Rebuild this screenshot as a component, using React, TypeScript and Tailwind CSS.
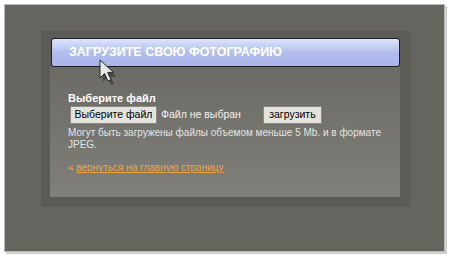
import React from 'react';

const Cursor: React.FC = () => (
  <svg width="22" height="28" viewBox="0 0 22 28" className="absolute left-[97px] top-[58px]">
    <path d="M4 4 L4 22 L8.5 17.5 L12 25 L15 23.7 L11.6 16.4 L17.5 16.4 Z" fill="#000" opacity="0.35" transform="translate(2 2)" />
    <path d="M3 2 L3 20 L7.5 15.5 L11 23 L14 21.7 L10.6 14.4 L16.5 14.4 Z" fill="#e8e8ea" stroke="#2a2a2a" strokeWidth="1" strokeLinejoin="round" />
  </svg>
);

const App: React.FC = () => {
  return (
    <div className="relative w-[450px] h-[256px] bg-white" style={{ fontFamily: '"Liberation Sans", Arial, sans-serif' }}>
      <div className="absolute left-[4px] top-[4px] w-[441px] h-[248px] border border-[#b8b8b8] shadow-[2px_2px_0_#d0d0d0]" />
      <div className="ml-[5px] pt-[5px]">
        <div className="w-[439px] h-[246px] bg-[#65645f] pl-[36px] pt-[26px]">
          <div className="w-[369px] h-[176px] bg-[#5c5b57] pl-[9px] pr-[10px] pt-[7px] pb-[10px] flex flex-col">
            <div className="h-[29px] rounded-[3px] border border-[#1e1e28] bg-gradient-to-b from-[#dfe5fa] via-[#b2bdee] to-[#a9b5ea] flex items-center pl-[17px] ml-[1px]">
              <span className="text-white font-bold text-[12.5px]">ЗАГРУЗИТЕ СВОЮ ФОТОГРАФИЮ</span>
            </div>
            <div className="flex-1 bg-gradient-to-b from-[#6b6a65] to-[#807f7a] pl-[18px] pt-[25px]">
              <div className="text-white font-bold text-[11px] leading-[13px]">Выберите файл</div>
              <div className="flex items-center mt-[1px] h-[18px]">
                <div className="h-[18px] w-[87px] ml-[2px] bg-[#e4e3dd] border border-[#8a8984] text-black text-[10.5px] flex items-center justify-center whitespace-nowrap">Выберите файл</div>
                <span className="ml-[4px] text-[#f2f2f2] text-[10.5px]">Файл не выбран</span>
                <div className="ml-[22px] h-[18px] w-[59px] bg-[#e4e3dd] border border-[#8a8984] text-black text-[10.5px] flex items-center justify-center">загрузить</div>
              </div>
              <p className="mt-[3px] text-[#e4e4e2] text-[10px] leading-[12px] w-[330px]">Могут быть загружены файлы объемом меньше 5 Mb. и в формате JPEG.</p>
              <div className="mt-[9px] text-[10px] text-[#f0a63a]">« <span className="underline">вернуться на главную страницу</span></div>
            </div>
          </div>
        </div>
      </div>
      <Cursor />
    </div>
  );
};

export default App;
